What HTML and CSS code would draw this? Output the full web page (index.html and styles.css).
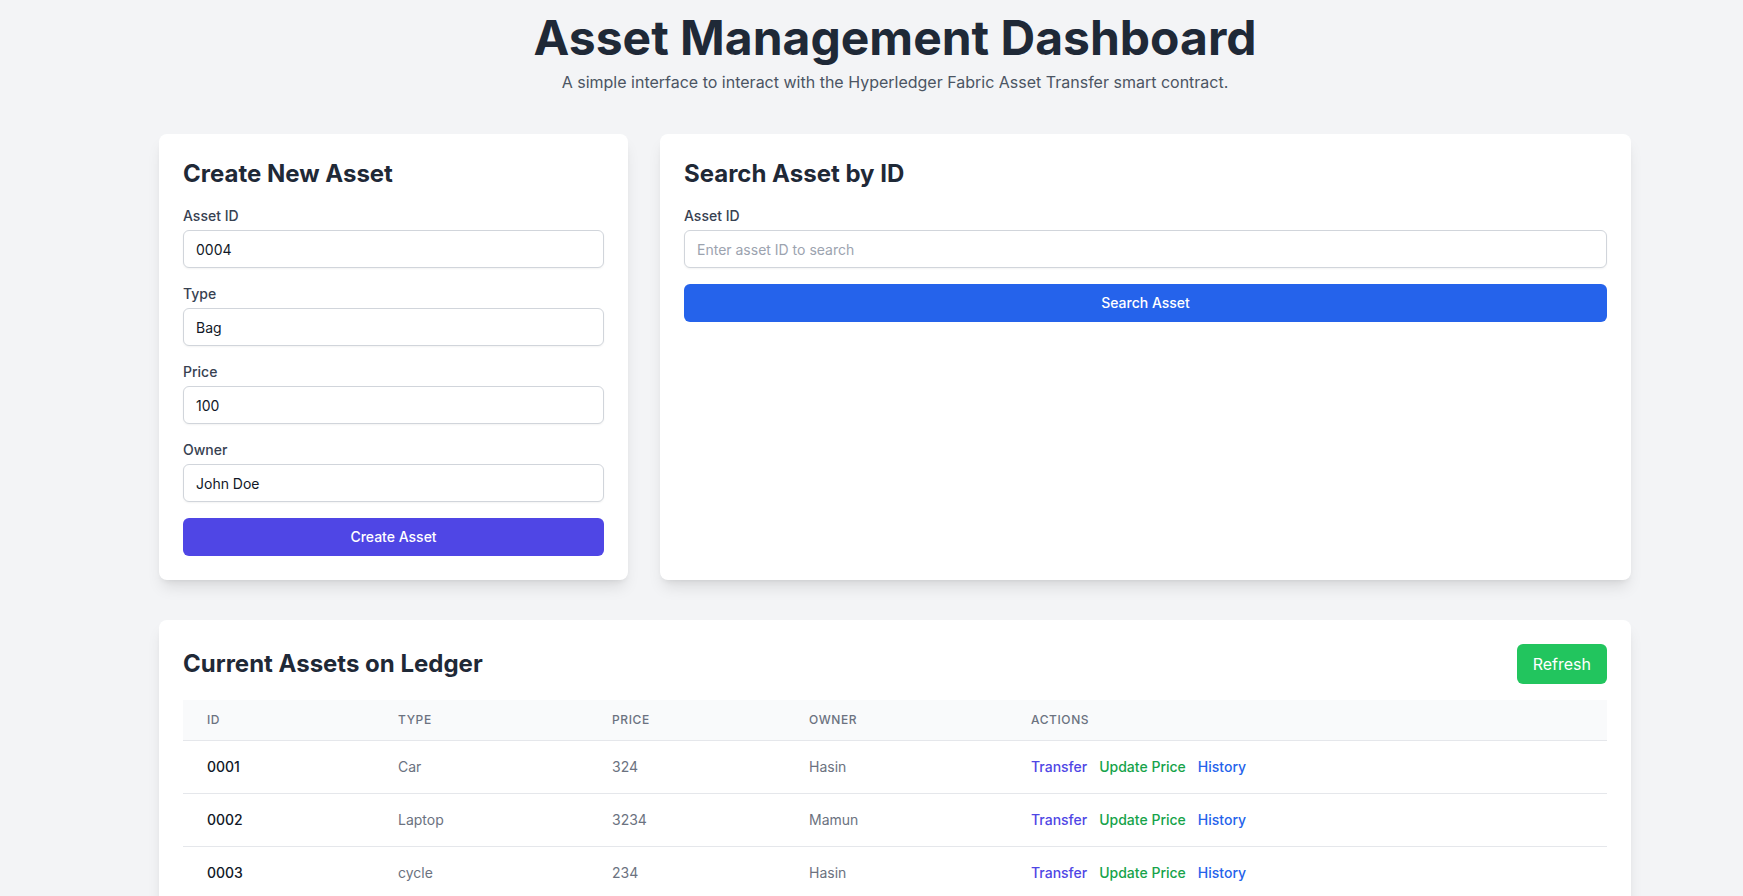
FILE: index.html
```html
<!DOCTYPE html>
<html lang="en">
<head>
<meta charset="utf-8">
<title>Asset Management Dashboard</title>
<link rel="stylesheet" href="styles.css">
</head>
<body>
<div class="page">
  <div class="container">
    <header class="header">
      <h1 class="title">Asset Management Dashboard</h1>
      <p class="subtitle">A simple interface to interact with the Hyperledger Fabric Asset Transfer smart contract.</p>
    </header>

    <div class="top-grid">
      <section class="card">
        <h2 class="card-title">Create New Asset</h2>
        <form class="form">
          <div class="field">
            <label class="label">Asset ID</label>
            <input class="input" type="text" value="0004">
          </div>
          <div class="field">
            <label class="label">Type</label>
            <input class="input" type="text" value="Bag">
          </div>
          <div class="field">
            <label class="label">Price</label>
            <input class="input" type="text" value="100">
          </div>
          <div class="field">
            <label class="label">Owner</label>
            <input class="input" type="text" value="John Doe">
          </div>
          <button type="button" class="btn btn-indigo">Create Asset</button>
        </form>
      </section>

      <section class="card">
        <h2 class="card-title">Search Asset by ID</h2>
        <div class="form">
          <div class="field">
            <label class="label">Asset ID</label>
            <input class="input" type="text" placeholder="Enter asset ID to search">
          </div>
          <button type="button" class="btn btn-blue">Search Asset</button>
        </div>
      </section>
    </div>

    <section class="card ledger">
      <div class="ledger-head">
        <h2 class="card-title no-mb">Current Assets on Ledger</h2>
        <button type="button" class="btn-refresh">Refresh</button>
      </div>
      <table class="table">
        <colgroup>
          <col class="c-id"><col class="c-type"><col class="c-price"><col class="c-owner"><col>
        </colgroup>
        <thead>
          <tr><th>ID</th><th>Type</th><th>Price</th><th>Owner</th><th>Actions</th></tr>
        </thead>
        <tbody>
          <tr>
            <td class="id">0001</td><td>Car</td><td>324</td><td>Hasin</td>
            <td class="actions"><a class="act act-indigo">Transfer</a><a class="act act-green">Update Price</a><a class="act act-blue">History</a></td>
          </tr>
          <tr>
            <td class="id">0002</td><td>Laptop</td><td>3234</td><td>Mamun</td>
            <td class="actions"><a class="act act-indigo">Transfer</a><a class="act act-green">Update Price</a><a class="act act-blue">History</a></td>
          </tr>
          <tr>
            <td class="id">0003</td><td>cycle</td><td>234</td><td>Hasin</td>
            <td class="actions"><a class="act act-indigo">Transfer</a><a class="act act-green">Update Price</a><a class="act act-blue">History</a></td>
          </tr>
        </tbody>
      </table>
    </section>
  </div>
</div>
</body>
</html>
```

FILE: styles.css
```css
* { box-sizing: border-box; }
html, body { margin: 0; padding: 0; }
body {
  background: #f3f4f6;
  font-family: Inter, "Noto Sans", "Liberation Sans", sans-serif;
  color: #1f2937;
}
.page {
  padding: 14px 0 40px 159px;
}
.container {
  width: 1472px;
}
.header {
  text-align: center;
  margin-bottom: 40px;
}
.title {
  margin: 0;
  font-size: 48px;
  line-height: 48px;
  font-weight: 700;
  color: #1f2937;
}
.subtitle {
  margin: 8px 0 0;
  font-size: 16px;
  line-height: 24px;
  color: #4b5563;
}
.top-grid {
  display: grid;
  grid-template-columns: 469fr 971fr;
  gap: 32px;
  margin-bottom: 40px;
}
.card {
  background: #fff;
  border-radius: 8px;
  padding: 24px;
  box-shadow: 0 10px 15px -3px rgba(0,0,0,0.1), 0 4px 6px -4px rgba(0,0,0,0.1);
}
.card-title {
  margin: 0 0 16px;
  font-size: 24px;
  line-height: 32px;
  font-weight: 700;
  color: #1f2937;
}
.card-title.no-mb { margin: 0; }
.form {
  display: flex;
  flex-direction: column;
  gap: 16px;
}
.field {
  display: flex;
  flex-direction: column;
  gap: 4px;
}
.label {
  font-size: 14px;
  line-height: 20px;
  font-weight: 500;
  color: #374151;
}
.input {
  width: 100%;
  height: 38px;
  padding: 8px 12px;
  border: 1px solid #d1d5db;
  border-radius: 6px;
  font-family: inherit;
  font-size: 14px;
  line-height: 20px;
  color: #111827;
  background: #fff;
  box-shadow: 0 1px 2px 0 rgba(0,0,0,0.05);
  outline: none;
}
.input::placeholder { color: #9ca3af; }
.btn {
  width: 100%;
  height: 38px;
  border: 0;
  border-radius: 6px;
  font-family: inherit;
  font-size: 14px;
  line-height: 20px;
  font-weight: 500;
  color: #fff;
  cursor: pointer;
}
.btn-indigo { background: #4f46e5; }
.btn-blue { background: #2563eb; }
.ledger { padding-bottom: 24px; }
.ledger-head {
  display: flex;
  justify-content: space-between;
  align-items: center;
  margin-bottom: 16px;
}
.btn-refresh {
  height: 40px;
  padding: 8px 16px;
  border: 0;
  border-radius: 6px;
  background: #22c55e;
  color: #fff;
  font-family: inherit;
  font-size: 16px;
  line-height: 24px;
  font-weight: 400;
}
.table {
  width: 100%;
  border-collapse: collapse;
  table-layout: fixed;
}
.c-id { width: 191px; }
.c-type { width: 214px; }
.c-price { width: 197px; }
.c-owner { width: 222px; }
.table thead tr { background: #f9fafb; }
.table th {
  text-align: left;
  padding: 12px 24px;
  font-size: 12px;
  line-height: 16px;
  font-weight: 500;
  text-transform: uppercase;
  letter-spacing: 0.05em;
  color: #6b7280;
}
.table tbody tr { border-top: 1px solid #e5e7eb; }
.table td {
  padding: 16px 24px;
  font-size: 14px;
  line-height: 20px;
  color: #6b7280;
  white-space: nowrap;
}
.table td.id { color: #111827; font-weight: 500; }
.act {
  font-weight: 500;
  margin-right: 12px;
  cursor: pointer;
}
.act:last-child { margin-right: 0; }
.act-indigo { color: #4f46e5; }
.act-green { color: #16a34a; }
.act-blue { color: #2563eb; }
```
